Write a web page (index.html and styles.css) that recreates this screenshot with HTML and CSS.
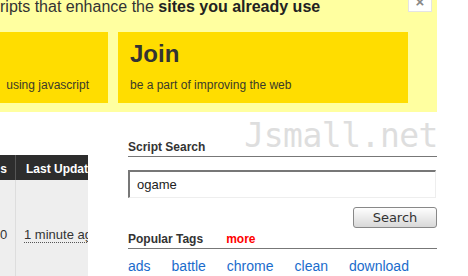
FILE: index.html
```html
<!DOCTYPE html>
<html lang="en">
<head>
    <meta charset="UTF-8">
    <title>Jsmall.net</title>
    <link rel="stylesheet" href="styles.css">
</head>
<body>
    <div class="banner">
        <p class="tagline">ripts that enhance the <b>sites you already use</b></p>
        <a href="#" class="close-button">&times;</a>
        <div class="boxes">
            <div class="box box-learn">
                <p class="box-text">using javascript</p>
            </div>
            <div class="box box-join">
                <h1>Join</h1>
                <p class="box-text">be a part of improving the web</p>
            </div>
        </div>
    </div>

    <div class="main">
        <div class="scripts-list">
            <div class="list-head">
                <div class="col-installs">s</div>
                <div class="col-updated">Last Update</div>
            </div>
            <div class="list-row">
                <div class="col-installs">0</div>
                <div class="col-updated"><span class="time-ago">1 minute ago</span></div>
            </div>
        </div>

        <div class="sidebar">
            <div class="section-head search-head">
                <h2>Script Search</h2>
                <div class="logo">Jsmall.net</div>
            </div>
            <form class="search-form">
                <input type="text" class="search-input" value="ogame">
                <button type="button" class="search-button">Search</button>
            </form>
            <div class="section-head tags-head">
                <h2>Popular Tags</h2>
                <a href="#" class="more-link">more</a>
            </div>
            <ul class="tag-list">
                <li><a href="#">ads</a></li>
                <li><a href="#">battle</a></li>
                <li><a href="#">chrome</a></li>
                <li><a href="#">clean</a></li>
                <li><a href="#">download</a></li>
            </ul>
        </div>
    </div>
</body>
</html>
```

FILE: styles.css
```css
* {
    margin: 0;
    padding: 0;
    box-sizing: border-box;
}
body {
    font-family: "Liberation Sans", Arial, sans-serif;
    color: #333;
    background-color: #fff;
    width: 468px;
    height: 276px;
    overflow: hidden;
}

/* banner */
.banner {
    position: relative;
    width: 437px;
    height: 113px;
    background-color: #ffffa0;
}
.tagline {
    font-size: 16px;
    line-height: 16px;
    height: 33px;
    margin-top: -1px;
    color: #333;
    white-space: nowrap;
}
.tagline b { color: #222; }
.close-button {
    position: absolute;
    top: 0;
    right: 5px;
    width: 24px;
    height: 13px;
    background-color: #fff;
    border: 1px solid #e4e4e4;
    border-top: none;
    color: #888;
    font-size: 15px;
    font-weight: bold;
    line-height: 6px;
    text-align: center;
    text-decoration: none;
    overflow: hidden;
}
.boxes {
    display: flex;
    gap: 10px;
}
.box {
    height: 71px;
    background-color: #ffdd00;
}
.box-learn {
    width: 108px;
    display: flex;
    justify-content: flex-end;
    padding-right: 19px;
    padding-top: 46px;
}
.box-join {
    width: 290px;
    padding: 10px 12px;
}
.box h1 {
    font-size: 24px;
    line-height: 24px;
    color: #333;
}
.box-text {
    font-size: 12px;
    line-height: 14px;
    color: #3a3a2a;
    white-space: nowrap;
}
.box-join .box-text { margin-top: 12px; }

/* main */
.main {
    display: flex;
    gap: 40px;
}
.scripts-list {
    width: 88px;
    margin-top: 43px;
    overflow: hidden;
}
.list-head, .list-row {
    display: flex;
    width: 120px;
    white-space: nowrap;
}
.list-head {
    height: 25px;
    background-color: #2d2d2d;
    color: #fff;
    font-size: 12px;
    font-weight: bold;
    line-height: 14px;
    padding-top: 7px;
}
.list-row {
    height: 100px;
    background-color: #eee;
    font-size: 13px;
    line-height: 15px;
}
.list-row > div {
    padding-top: 47px;
}
.col-installs {
    width: 16px;
    flex-shrink: 0;
    text-align: right;
    padding-right: 8px;
}
.list-head .col-installs {
    border-right: 1px solid #555;
    margin-top: -7px;
    padding-top: 7px;
}
.list-row .col-installs { border-right: 1px solid #ddd; }
.list-head .col-updated { padding-left: 10px; }
.list-row .col-updated { padding-left: 8px; }
.time-ago {
    border-bottom: 1px dotted #555;
}

/* sidebar */
.sidebar {
    width: 309px;
}
.section-head {
    display: flex;
    align-items: flex-end;
    border-bottom: 1px solid #777;
}
.section-head h2 {
    font-size: 12px;
    line-height: 14px;
    font-weight: bold;
    color: #333;
    padding-bottom: 2px;
}
.search-head {
    height: 45px;
    justify-content: space-between;
}
.logo {
    font-family: "DejaVu Sans Mono", monospace;
    font-size: 33px;
    line-height: 34px;
    color: #dedede;
    letter-spacing: -0.5px;
    margin-bottom: 3px;
    margin-right: -1px;
}
.search-form {
    display: flex;
    flex-direction: column;
    align-items: flex-end;
}
.search-input {
    width: 308px;
    height: 28px;
    margin-top: 13px;
    align-self: flex-start;
    border-style: solid;
    border-width: 2px 1px 1px 2px;
    border-color: #777 #eee #eee #777;
    padding-left: 7px;
    font-family: "Liberation Sans", Arial, sans-serif;
    font-size: 13px;
    color: #222;
    outline: none;
}
.search-button {
    width: 84px;
    height: 21px;
    margin-top: 9px;
    border: 1px solid #888;
    border-radius: 3px;
    background: linear-gradient(#fefefe, #d8d8d8);
    font-family: "DejaVu Sans", Verdana, sans-serif;
    font-size: 13px;
    color: #333;
}
.tags-head {
    margin-top: 4px;
    gap: 23px;
}
.more-link {
    font-size: 12px;
    line-height: 14px;
    font-weight: bold;
    color: #f00;
    text-decoration: none;
    padding-bottom: 2px;
}
.tag-list {
    list-style: none;
    display: flex;
    gap: 21px;
    margin-top: 8px;
}
.tag-list a {
    font-size: 14px;
    line-height: 16px;
    color: #1a6ccc;
    text-decoration: none;
}
```
